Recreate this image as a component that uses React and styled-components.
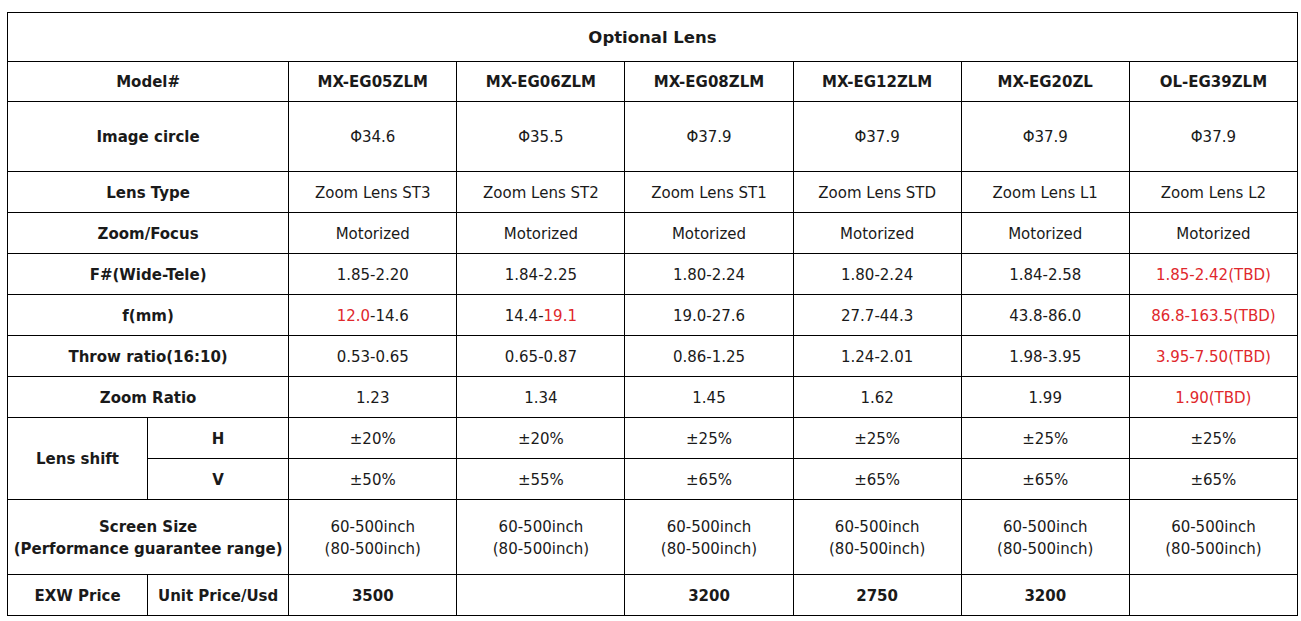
import React from 'react'
import styled, { createGlobalStyle } from 'styled-components'

const INK = '#1a1a1a'
const RED = '#e0282c'

const GlobalStyle = createGlobalStyle`
  body {
    margin: 0;
    background: #fff;
    font-family: "DejaVu Sans", sans-serif;
  }
`

const Page = styled.div`
  padding: 12px 0 0 7px;
`

const Table = styled.table`
  border-collapse: collapse;
  table-layout: fixed;
  width: 1291px;
  color: ${INK};
  font-size: 15px;
`

const Row = styled.tr`
  height: ${p => p.h || 41}px;
`

const Cell = styled.td`
  border: 1px solid #000;
  padding: 1px 0 0;
  text-align: center;
  vertical-align: middle;
  font-weight: ${p => (p.bold ? 'bold' : 'normal')};
  line-height: 22px;
  white-space: nowrap;
`

const Title = styled(Cell)`
  font-size: 16.5px;
  font-weight: bold;
`

const Red = styled.span`
  color: ${RED};
`

const models = ['MX-EG05ZLM', 'MX-EG06ZLM', 'MX-EG08ZLM', 'MX-EG12ZLM', 'MX-EG20ZL', 'OL-EG39ZLM']

const rows = [
  { label: 'Image circle', h: 70, values: ['Φ34.6', 'Φ35.5', 'Φ37.9', 'Φ37.9', 'Φ37.9', 'Φ37.9'] },
  { label: 'Lens Type', values: ['Zoom Lens ST3', 'Zoom Lens ST2', 'Zoom Lens ST1', 'Zoom Lens STD', 'Zoom Lens L1', 'Zoom Lens L2'] },
  { label: 'Zoom/Focus', values: Array(6).fill('Motorized') },
  { label: 'F#(Wide-Tele)', values: ['1.85-2.20', '1.84-2.25', '1.80-2.24', '1.80-2.24', '1.84-2.58', <Red>1.85-2.42(TBD)</Red>] },
  {
    label: 'f(mm)',
    values: [
      <><Red>12.0</Red>-14.6</>,
      <>14.4-<Red>19.1</Red></>,
      '19.0-27.6', '27.7-44.3', '43.8-86.0',
      <Red>86.8-163.5(TBD)</Red>
    ]
  },
  { label: 'Throw ratio(16:10)', values: ['0.53-0.65', '0.65-0.87', '0.86-1.25', '1.24-2.01', '1.98-3.95', <Red>3.95-7.50(TBD)</Red>] },
  { label: 'Zoom Ratio', values: ['1.23', '1.34', '1.45', '1.62', '1.99', <Red>1.90(TBD)</Red>] }
]

const shiftH = ['±20%', '±20%', '±25%', '±25%', '±25%', '±25%']
const shiftV = ['±50%', '±55%', '±65%', '±65%', '±65%', '±65%']
const prices = ['3500', '', '3200', '2750', '3200', '']

export default function App () {
  return (
    <Page>
      <GlobalStyle />
      <Table>
        <colgroup>
          <col style={{ width: 140 }} />
          <col style={{ width: 141 }} />
          {models.map(m => <col key={m} style={{ width: 168 }} />)}
        </colgroup>
        <tbody>
          <Row h={49}>
            <Title colSpan={8}>Optional Lens</Title>
          </Row>
          <Row h={40}>
            <Cell colSpan={2} bold>Model#</Cell>
            {models.map(m => <Cell key={m} bold>{m}</Cell>)}
          </Row>
          {rows.map(r => (
            <Row key={r.label} h={r.h}>
              <Cell colSpan={2} bold>{r.label}</Cell>
              {r.values.map((v, i) => <Cell key={i}>{v}</Cell>)}
            </Row>
          ))}
          <Row>
            <Cell rowSpan={2} bold>Lens shift</Cell>
            <Cell bold>H</Cell>
            {shiftH.map((v, i) => <Cell key={i}>{v}</Cell>)}
          </Row>
          <Row>
            <Cell bold>V</Cell>
            {shiftV.map((v, i) => <Cell key={i}>{v}</Cell>)}
          </Row>
          <Row h={75}>
            <Cell colSpan={2} bold>Screen Size<br />(Performance guarantee range)</Cell>
            {models.map(m => <Cell key={m}>60-500inch<br />(80-500inch)</Cell>)}
          </Row>
          <Row>
            <Cell bold>EXW Price</Cell>
            <Cell bold>Unit Price/Usd</Cell>
            {prices.map((p, i) => <Cell key={i} bold>{p}</Cell>)}
          </Row>
        </tbody>
      </Table>
    </Page>
  )
}
